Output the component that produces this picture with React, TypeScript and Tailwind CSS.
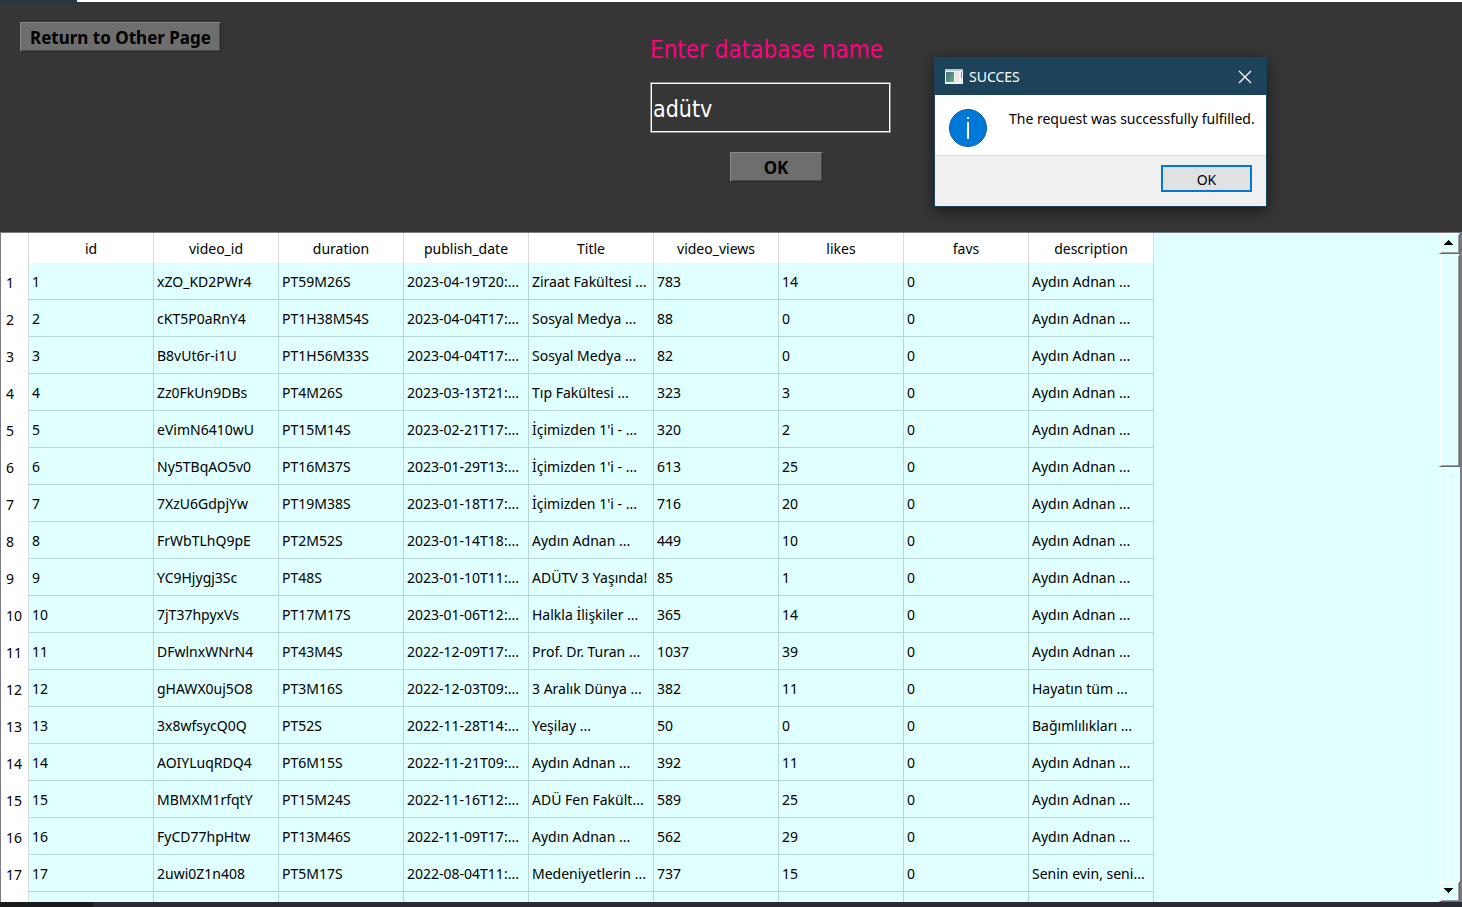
import React from "react";

const columns = [
  "id",
  "video_id",
  "duration",
  "publish_date",
  "Title",
  "video_views",
  "likes",
  "favs",
  "description",
];

const rows: string[][] = [
  ["1", "xZO_KD2PWr4", "PT59M26S", "2023-04-19T20:...", "Ziraat Fakültesi ...", "783", "14", "0", "Aydın Adnan ..."],
  ["2", "cKT5P0aRnY4", "PT1H38M54S", "2023-04-04T17:...", "Sosyal Medya ...", "88", "0", "0", "Aydın Adnan ..."],
  ["3", "B8vUt6r-i1U", "PT1H56M33S", "2023-04-04T17:...", "Sosyal Medya ...", "82", "0", "0", "Aydın Adnan ..."],
  ["4", "Zz0FkUn9DBs", "PT4M26S", "2023-03-13T21:...", "Tıp Fakültesi ...", "323", "3", "0", "Aydın Adnan ..."],
  ["5", "eVimN6410wU", "PT15M14S", "2023-02-21T17:...", "İçimizden 1'i - ...", "320", "2", "0", "Aydın Adnan ..."],
  ["6", "Ny5TBqAO5v0", "PT16M37S", "2023-01-29T13:...", "İçimizden 1'i - ...", "613", "25", "0", "Aydın Adnan ..."],
  ["7", "7XzU6GdpjYw", "PT19M38S", "2023-01-18T17:...", "İçimizden 1'i - ...", "716", "20", "0", "Aydın Adnan ..."],
  ["8", "FrWbTLhQ9pE", "PT2M52S", "2023-01-14T18:...", "Aydın Adnan ...", "449", "10", "0", "Aydın Adnan ..."],
  ["9", "YC9Hjygj3Sc", "PT48S", "2023-01-10T11:...", "ADÜTV 3 Yaşında!", "85", "1", "0", "Aydın Adnan ..."],
  ["10", "7jT37hpyxVs", "PT17M17S", "2023-01-06T12:...", "Halkla İlişkiler ...", "365", "14", "0", "Aydın Adnan ..."],
  ["11", "DFwlnxWNrN4", "PT43M4S", "2022-12-09T17:...", "Prof. Dr. Turan ...", "1037", "39", "0", "Aydın Adnan ..."],
  ["12", "gHAWX0uj5O8", "PT3M16S", "2022-12-03T09:...", "3 Aralık Dünya ...", "382", "11", "0", "Hayatın tüm ..."],
  ["13", "3x8wfsycQ0Q", "PT52S", "2022-11-28T14:...", "Yeşilay ...", "50", "0", "0", "Bağımlılıkları ..."],
  ["14", "AOIYLuqRDQ4", "PT6M15S", "2022-11-21T09:...", "Aydın Adnan ...", "392", "11", "0", "Aydın Adnan ..."],
  ["15", "MBMXM1rfqtY", "PT15M24S", "2022-11-16T12:...", "ADÜ Fen Fakült...", "589", "25", "0", "Aydın Adnan ..."],
  ["16", "FyCD77hpHtw", "PT13M46S", "2022-11-09T17:...", "Aydın Adnan ...", "562", "29", "0", "Aydın Adnan ..."],
  ["17", "2uwi0Z1n408", "PT5M17S", "2022-08-04T11:...", "Medeniyetlerin ...", "737", "15", "0", "Senin evin, seni..."],
];

const raised =
  "border border-t-[#8a8a8a] border-l-[#8a8a8a] border-r-[#2a2a2a] border-b-[#2a2a2a] bg-[#6e6e6e] pt-0.5 font-['Noto_Sans',sans-serif] text-[17px] leading-6 font-bold text-black shadow-[inset_-1px_-1px_0_#4c4c4c]";

function VideoTable() {
  return (
    <table className="w-[1153px] table-fixed border-separate border-spacing-0 text-sm text-black">
      <colgroup>
        <col className="w-7" />
        {columns.map((c) => (
          <col key={c} className="w-[125px]" />
        ))}
      </colgroup>
      <thead>
        <tr className="h-[30px] bg-white">
          <td className="border-r border-[#dcdcdc] p-0" />
          {columns.map((c) => (
            <th key={c} scope="col" className="border-r border-[#dcdcdc] p-0 pt-0.5 font-normal">
              {c}
            </th>
          ))}
        </tr>
      </thead>
      <tbody>
        {rows.map((r) => (
          <tr key={r[0]} className="h-[37px]">
            <th scope="row" className="border-r border-[#dcdcdc] bg-white p-0 pt-0.5 pl-[5px] text-left font-normal">
              {r[0]}
            </th>
            {r.map((v, i) => (
              <td key={i} className="border-r border-b border-[#b9d6d6] p-0 pt-0.5 pl-[3px] whitespace-nowrap">
                {v}
              </td>
            ))}
          </tr>
        ))}
        <tr className="h-[37px]">
          <td className="border-r border-[#dcdcdc] bg-white" />
          {columns.map((c) => (
            <td key={c} className="border-r border-[#b9d6d6]" />
          ))}
        </tr>
      </tbody>
    </table>
  );
}

function ScrollBar() {
  const part =
    "border border-t-[#e0ffff] border-l-[#e0ffff] border-r-[#696969] border-b-[#696969] bg-[#e0ffff] shadow-[inset_1px_1px_0_#ffffff,inset_-1px_-1px_0_#a0a0a0]";
  return (
    <div className="flex w-[21px] shrink-0 flex-col bg-[repeating-conic-gradient(#ffffff_0_25%,#e0ffff_0_50%)] bg-[length:2px_2px]">
      <button type="button" aria-label="Scroll up" className={`flex h-[21px] shrink-0 items-center justify-center pr-0.5 pb-0.5 ${part}`}>
        <svg width="9" height="5" viewBox="0 0 9 5" shapeRendering="crispEdges">
          <path d="M4 0h1v1h1v1h1v1h1v1h1v1H0V4h1V3h1V2h1V1h1z" />
        </svg>
      </button>
      <div className={`h-[213px] shrink-0 ${part}`} />
      <div className="flex-1" />
      <button type="button" aria-label="Scroll down" className={`flex h-[21px] shrink-0 items-center justify-center pr-0.5 pb-0.5 ${part}`}>
        <svg width="9" height="5" viewBox="0 0 9 5" shapeRendering="crispEdges">
          <path d="M4 5h1V4h1V3h1V2h1V1h1V0H0v1h1v1h1v1h1v1h1z" />
        </svg>
      </button>
    </div>
  );
}

function SuccessDialog() {
  return (
    <div
      role="dialog"
      aria-labelledby="dialog-title"
      className="absolute top-[57px] left-[934px] flex w-[333px] flex-col border border-[#1c435a] bg-white text-sm text-black shadow-[0_4px_14px_rgba(0,0,0,0.5)]"
    >
      <div className="flex h-[37px] items-center bg-[#1c435a] pr-3.5 pl-2.5 text-white">
        <svg width="18" height="15" viewBox="0 0 18 15">
          <defs>
            <linearGradient id="pane" x1="0" y1="0" x2="1" y2="1">
              <stop offset="0" stopColor="#3c6f92" />
              <stop offset="1" stopColor="#62b077" />
            </linearGradient>
          </defs>
          <rect width="18" height="15" fill="#f1f1f1" />
          <rect width="18" height="2" fill="#c4c4c4" />
          <rect x="1" y="3" width="8" height="10" fill="url(#pane)" />
          <rect x="10" y="3" width="4" height="10" fill="#e6e6e6" />
          <rect x="15" y="3" width="2" height="6" fill="#5fa191" />
          <rect x="15" y="3" width="1" height="10" fill="#f8f8f8" />
        </svg>
        <h2 id="dialog-title" className="ml-1.5 flex-1">SUCCES</h2>
        <button type="button" aria-label="Close">
          <svg width="14" height="14" viewBox="0 0 14 14" fill="none" stroke="#fff" strokeWidth="1.3">
            <path d="M1 1l12 12M13 1L1 13" />
          </svg>
        </button>
      </div>
      <div className="flex h-[61px] items-start border-b border-[#dfdfdf] pt-3.5 pl-3.5">
        <svg width="38" height="38" viewBox="0 0 38 38">
          <circle cx="19" cy="19" r="18.5" fill="#0078d7" stroke="#005a9e" />
          <rect x="18" y="8" width="2" height="2" fill="#fff" />
          <rect x="18" y="13" width="2" height="17" fill="#fff" />
        </svg>
        <p className="ml-[22px] whitespace-nowrap">The request was successfully fulfilled.</p>
      </div>
      <div className="flex h-[50px] items-start justify-end bg-[#f0f0f0] pt-[9px] pr-3.5">
        <button type="button" className="h-[27px] w-[91px] border-2 border-[#0078d7] bg-[#e1e1e1] pt-0.5">
          OK
        </button>
      </div>
    </div>
  );
}

export default function App() {
  return (
    <div className="relative flex h-screen flex-col overflow-hidden bg-[#363636] font-['Noto_Sans',sans-serif]">
      <div className="flex h-0.5 shrink-0 bg-white">
        <div className="h-[5px] w-[77px] bg-[#2b3740]" />
      </div>
      <header className="flex h-[230px] shrink-0 items-start pl-5">
        <button type="button" className={`mt-5 h-[30px] w-[201px] ${raised}`}>
          Return to Other Page
        </button>
        <form className="ml-[429px] flex w-[252px] flex-col pt-8 font-['DejaVu_Sans_Condensed','DejaVu_Sans',sans-serif]" onSubmit={(e) => e.preventDefault()}>
          <label htmlFor="database" className="text-2xl leading-8 whitespace-nowrap text-[#ff007f]">
            Enter database name
          </label>
          <input
            id="database"
            defaultValue="adütv"
            className="mt-4 h-[51px] w-[241px] border border-[#8a8a8a] bg-transparent px-0.5 pt-0.5 text-[23px] text-white shadow-[inset_0_0_0_1px_#ffffff] outline-none"
          />
          <button type="submit" className={`mt-[19px] h-[30px] w-[93px] self-center ${raised}`}>
            OK
          </button>
        </form>
      </header>
      <main className="flex min-h-0 flex-1 border-t border-r-2 border-l border-[#7a7a82] bg-[#e0ffff]">
        <div className="min-w-0 flex-1 overflow-hidden">
          <VideoTable />
        </div>
        <ScrollBar />
      </main>
      <footer className="h-[5px] shrink-0 bg-[#2a2b35]">
        <div className="h-full w-[93px] bg-[#1b1b1f]" />
      </footer>
      <SuccessDialog />
    </div>
  );
}
